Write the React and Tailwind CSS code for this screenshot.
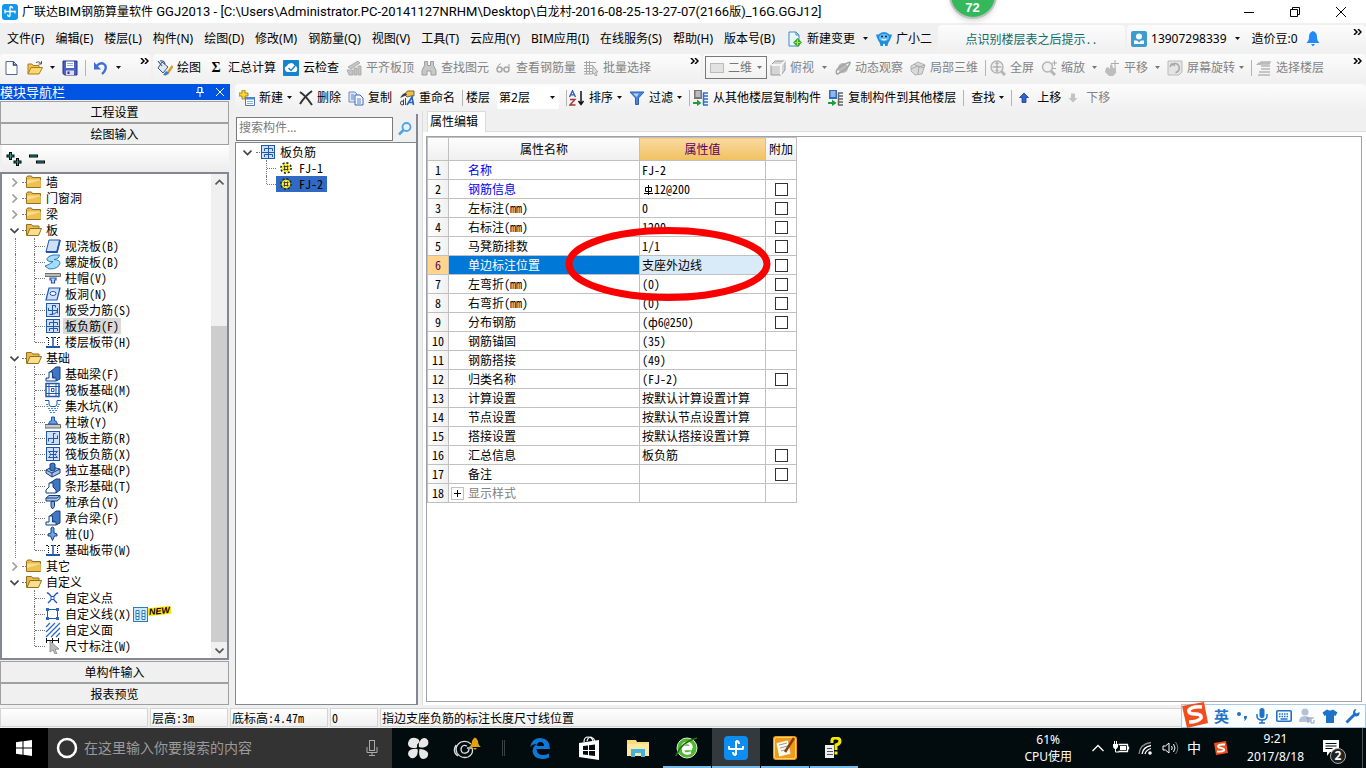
import React from "react";

/* ---------- drawing helpers ---------- */
function Ic({ w = 16, h = 16, vb, children }) {
  return (
    <svg width={w} height={h} viewBox={vb || `0 0 ${w} ${h}`} fill="none" className="shrink-0" aria-hidden="true">
      {children}
    </svg>
  );
}
const Caret = ({ tone = "#111" }) => (
  <Ic w={5} h={3}><path d="M0 0h5L2.500 3z" fill={tone} /></Ic>
);
const More = () => (
  <Ic w={9} h={6}><path d="M1 0l3 3-3 3M5 0l3 3-3 3" stroke="#000" strokeWidth="1.500" /></Ic>
);
const Sep = () => <span className="h-4 w-px shrink-0 bg-[#b4b4b4]" />;

const G = "#b5b5b5";
const icons = {
  logo: (
    <Ic><rect width="16" height="16" rx="3" fill="#1296ee" /><path d="M8 2.500v10M3 7.500h10M8 2.500q2.500 0 2.500 2M3 5.500v4M8 12.500q-2.500 0-2.500-2M13 9.500v-3" stroke="#fff" strokeWidth="1.300" /></Ic>
  ),
  changeDoc: (
    <Ic><path d="M2 1h7l3 3v11H2z" fill="#eaf6fd" stroke="#3e8cc0" /><path d="M9 1v3h3" stroke="#3e8cc0" /><path d="M10.500 7l4.500 4.500-4.500 4.500L6 11.500z" fill="#39a51c" /><path d="M10.500 8.500v6M7.500 11.500h6" stroke="#9be07f" strokeWidth="1.200" /></Ic>
  ),
  mascot: (
    <Ic><ellipse cx="8" cy="7" rx="6.500" ry="6" fill="#1c8fe3" /><path d="M0 3.500h3v5L1 7zM16 3.500h-3v5L15 7zM3.500 11h3.500v4H4.500zM9 11h3.500l-1 4H9z" fill="#1c8fe3" /><ellipse cx="8" cy="6.500" rx="5" ry="3.800" fill="#62bdf6" /><circle cx="6" cy="5.500" r="1" fill="#123" /><circle cx="10" cy="5.500" r="1" fill="#123" /><path d="M5.500 8q2.500 2 5 0" stroke="#fff" /></Ic>
  ),
  user: (
    <Ic><rect width="16" height="16" rx="2" fill="#3c9ccf" /><circle cx="8" cy="5.500" r="3" fill="#fff" /><path d="M3 13V9.500h3L8 11.500l2-2h3V13z" fill="#fff" /></Ic>
  ),
  bell: (
    <Ic w={14}><path d="M7 0c-3 1-4 3-4 6 0 3-1 4-2.500 6h13C12 10 11 9 11 6c0-3-1-5-4-6zM5 13h4l-2 2.500z" fill="#2389f5" /></Ic>
  ),
  newDoc: <Ic><path d="M2 1.500h7.500L13 5v9.500H2z" fill="#fff" stroke="#54698c" /><path d="M9.500 1.500V5H13" stroke="#2b4a80" strokeWidth="1.500" /></Ic>,
  open: (
    <Ic><path d="M1 14V4h4l1 1.500h6V8" fill="#f3c24d" stroke="#a87f26" /><path d="M1 14l3-6.500h11.500L12 14z" fill="#ffd86b" stroke="#a87f26" /><path d="M9 2.500q3-2 5 1M14.500 1v3h-3" stroke="#555" /></Ic>
  ),
  save: (
    <Ic><path d="M1 1h14v14H2.500L1 13.500z" fill="#4a62c4" stroke="#26338c" /><path d="M4 1.500h8V8H4z" fill="#fff" /><path d="M5 3.500h6M5 5.500h6" stroke="#9aabdc" /><path d="M4 10.500h8V15H4z" fill="#dde" /><path d="M5.500 11.500h2V14h-2z" fill="#26338c" /></Ic>
  ),
  undo: <Ic><path d="M3.500 6q3.500-3.500 6.500-2.500 3.500 1.500 2.500 5.500-.8 3-3.500 5" stroke="#3f6ed6" strokeWidth="2.400" /><path d="M1 2v7.500h7z" fill="#3f6ed6" /></Ic>,
  draw: (
    <Ic><path d="M5 2l6 5-5 6-5-5z" fill="#dfe9f6" stroke="#39597f" /><path d="M1 1l4 5M3 1q4-1 5 3" stroke="#39597f" strokeWidth="1.200" /><path d="M10 14l5.500-8" stroke="#d8a02c" strokeWidth="2.500" /><path d="M6 15l3-4 3 2-3 2.500z" fill="#3d7ad6" /></Ic>
  ),
  cloud: (
    <Ic><rect width="16" height="16" rx="1" fill="#1584cf" /><path d="M2 9.500a2.500 2.500 0 0 1 2-3.500 4 4 0 0 1 7.500-.5A3.500 3.500 0 0 1 12.500 12H5A3 3 0 0 1 2 9.500z" fill="#fff" /><path d="M5.500 8l2.500 2.500 4-4.500" stroke="#1584cf" strokeWidth="1.500" /></Ic>
  ),
  align: <Ic><path d="M2 7l10-6 2 2-9 6zM1 10h6v5H3zM8 8h3v7H8zM12 6h3v9h-3z" fill="#c4c4c4" stroke="#a5a5a5" strokeWidth=".8" /></Ic>,
  binoc: <Ic><path d="M3.500 1.500h3v4h3v-4h3v4l2.500 5V15h-5v-4H6v4H1v-4.500l2.500-5z" fill="#c8c8c8" stroke="#9e9e9e" /></Ic>,
  glasses: <Ic><circle cx="3.500" cy="9.500" r="2.500" stroke="#a8a8a8" strokeWidth="1.500" /><circle cx="10.500" cy="9.500" r="2.500" stroke="#a8a8a8" strokeWidth="1.500" /><path d="M6 9h2M1 9q1-5 4-5.500M13 9V4" stroke="#a8a8a8" /></Ic>,
  batch: <Ic><path d="M1 2.500h12M1 5.500h9M1 8.500h8M1 11.500h8M1 14h8M3.500 1v13M6.500 1v13" stroke="#a6a6a6" /><path d="M10 6l5 6-2.500.2 1.500 3-1.500.8-1.500-3L9.500 14z" fill="#ddd" stroke="#999" strokeWidth=".8" /></Ic>,
  cube: <Ic><path d="M1 5l4-4h10v9l-4 5H1z" fill="#d5d5d5" stroke="#999" /><path d="M1 5h10v10M11 5l4-4" stroke="#fff" strokeWidth="1.500" /></Ic>,
  orbit: <Ic><ellipse cx="8" cy="8" rx="5" ry="5" fill="#b9b9b9" /><path d="M2 14Q-1 10 8 5q8-4 7-2-1 4-7 8-5 3-6 3z" stroke="#a4a4a4" strokeWidth="1.500" /></Ic>,
  local3d: <Ic><path d="M1 6l7-4 7 3-3 9-7 1-4-4z" fill="#d9d9d9" stroke="#b0b0b0" /><path d="M4 4l5 3-1 7M1 9l7-3 6 2M9 7l6-2" stroke="#aaa" /></Ic>,
  full: <Ic><circle cx="7" cy="7" r="6" fill="#eee" stroke={G} strokeWidth="1.500" /><path d="M7 2.500v9M2.500 7h9M5.500 4L7 2.500 8.500 4M5.500 10L7 11.500 8.500 10" stroke="#999" /><path d="M11 11l4 4" stroke={G} strokeWidth="3" /></Ic>,
  zoom: <Ic><circle cx="6.500" cy="7" r="5" fill="#f1f1f1" stroke={G} strokeWidth="1.500" /><path d="M10 11l4 4" stroke={G} strokeWidth="3" /><path d="M11 3h5M13.500 .5v5M11 8.500h4" stroke="#aaa" /></Ic>,
  pan: <Ic><path d="M2 8l2-1 2 2V5l2-1 1 4 3 0v5l-3 3H5l-4-4z" fill="#bdbdbd" /><path d="M11 0v8M7 3.500h8" stroke="#aaa" /></Ic>,
  rotate: <Ic><path d="M1 1h14v11l-3 3H1z" fill="#e4e4e4" stroke="#bbb" /><path d="M4.500 5a4.500 4.500 0 1 1 4 7.500M3 7l1.500-3L8 5.500" stroke="#a5a5a5" strokeWidth="1.500" /></Ic>,
  floors: <Ic><path d="M5 2h9l-1 2H4zM5 6h9M5 9h9M3 12h11M2 15h12" fill="#ccc" stroke={G} strokeWidth="1.500" /><path d="M0 5l3-3 2 3z" fill={G} /></Ic>,
  create: <Ic><path d="M3 0h3v3h3v3H6v3H3V6H0V3h3z" fill="#ffd62e" stroke="#8c7416" strokeWidth=".8" /><path d="M6.500 7.500h9v8h-9z" fill="#fff" stroke="#4d79b8" /><path d="M6 7h10v2.500H6z" fill="#4d86d0" /><path d="M8 11.500h6M8 13.500h6" stroke="#8fb0dd" /></Ic>,
  del: <Ic w={14}><path d="M1 2q6 4 12 13M13 1Q6 6 1 14" stroke="#333" strokeWidth="2" /></Ic>,
  copy: <Ic><path d="M1 2h6l2 2v8H1z" fill="#dce8f8" stroke="#6c8cc4" /><path d="M7 5h5l3 3v7H7z" fill="#f4f8ff" stroke="#4066b5" /><path d="M3 5h3M3 7h3M3 9h3M9 9h4M9 11h4M9 13h4" stroke="#5a80c8" /></Ic>,
  rename: (
    <Ic><path d="M6 5q1-5 5-4h4v5h-3L8 7z" fill="#f0bd4a" stroke="#5d4a1e" strokeWidth=".8" /><path d="M3 5q4-4 5 0L1 8z" fill="#444" /><path d="M4.500 9.500v5.500M4.500 12.500q0-1.500-1.500-1.500t-1.500 2T3 15t1.500-1.500M6.500 8v7" stroke="#333" strokeWidth=".9" /><path d="M8 15l5-8 1.500 8M10 12.500h4" stroke="#2160c4" strokeWidth="1.600" /></Ic>
  ),
  sort: (
    <Ic><path d="M.5 7L3.500 .8 6.500 7M1.800 4.800h3.500" stroke="#2d56a8" strokeWidth="1.300" /><path d="M1 9.500h5L1 15h5.500" stroke="#a8323a" strokeWidth="1.400" /><path d="M12 1v12M9.500 11l2.500 3.500 2.500-3.500" stroke="#111" strokeWidth="1.500" /></Ic>
  ),
  filter: <Ic><path d="M1 2h14L9.500 8v6.500h-3V8z" fill="#4a86e0" stroke="#2c5fb4" /><path d="M4 3.500h6L7.500 7z" fill="#b5d2fb" /></Ic>,
  copyFrom: <Ic><path d="M1 0h8v9H1z" fill="#777" /><path d="M2.500 2h5M2.500 4h5M2.500 6h5" stroke="#fff" /><path d="M10 3h5M10 6h5M10 9h5M10 12h5M10 15h5M10.500 3v12" stroke="#2f6dc9" strokeWidth="1.500" /><path d="M0 12h4V9.500L8.500 13 4 16v-2H0z" fill="#1f9d3a" /></Ic>,
  copyTo: <Ic><path d="M1 0h8v9H1z" fill="#2f6dc9" /><path d="M2.500 2h5M2.500 4h5M2.500 6h5" stroke="#fff" /><path d="M10 3h5M10 6h5M10 9h5M10 12h5M10 15h5M10.500 3v12" stroke="#666" strokeWidth="1.500" /><path d="M0 12h4V9.500L8.500 13 4 16v-2H0z" fill="#1f9d3a" /></Ic>,
  up: <Ic w={10} h={10}><path d="M5 0l4.500 4.500H7V9.500H3V4.500H.5z" fill="#2f62d0" stroke="#1b3f94" strokeWidth=".8" /></Ic>,
  down: <Ic w={10} h={10}><path d="M5 9.500L.5 5H3V.5h4V5h2.500z" fill="#c3c3c3" /></Ic>,
  search: <Ic w={14} h={14}><circle cx="8.500" cy="5" r="4" stroke="#4ba6e8" strokeWidth="1.800" /><path d="M5.500 8L1 12.500" stroke="#4ba6e8" strokeWidth="2.500" /></Ic>,
};

const B = "#1f56b0";
const L = "#cfe0fa";
const boxFrame = <rect x="1.500" y="1.500" width="13" height="13" fill={L} stroke={B} />;
const beam = <Ic><path d="M5 6l6-5h4v12l-4 2z" fill="#3e78c4" stroke="#173f7d" /><path d="M1 15v-3h3V6h3.500v6H11v3z" fill="#e6effb" stroke="#173f7d" /></Ic>;
const strip = <Ic><path d="M1 3.500h3m2 0h5m2 0h2" stroke="#111" strokeDasharray="2 1" /><path d="M1 13h14" stroke={B} strokeWidth="2" /><path d="M8 3v10" stroke={B} strokeWidth="1.500" /><path d="M3.500 4v8M12.500 4v8" stroke="#111" strokeDasharray="1 1" /></Ic>;
const tIcons = {
  slab: <Ic><path d="M4 2h11l-3 12H1z" fill={L} stroke={B} /><path d="M1 14h11l3-12" stroke={B} strokeWidth="1.800" /></Ic>,
  spiral: <Ic><path d="M14.500 1H8Q1 3 2 6q1 2 6 1.500Q4 11 0 12l4 3q10 0 11-6 0-3-6-3.500 5-.5 5.500-4.500z" fill="#a6dcf7" stroke="#2a7fc1" /></Ic>,
  cap: <Ic><path d="M0 3.500h15.500v3H0z" fill="#bbb" stroke="#555" strokeWidth=".8" /><path d="M5 8h6v2H9.500v3h-3v-3H5z" fill={L} stroke={B} strokeWidth="1.200" /></Ic>,
  hole: <Ic><path d="M4 2h11l-3 12H1z" fill={L} stroke={B} strokeWidth="1.200" /><ellipse cx="8" cy="7.500" rx="3" ry="2" stroke={B} fill="#fff" /></Ic>,
  force: <Ic>{boxFrame}<path d="M7.500 3v10M3 8.500h10M3.500 6v3M12.500 6v5.500M7.500 3.500h3v2M7.500 12.500h-3M5 12.500q5 0 7.500-3" stroke={B} /></Ic>,
  neg: <Ic>{boxFrame}<path d="M8.500 2v12M2 8.500h12M4.500 7V4.500h8V7M4.500 13v-2.500h8V13" stroke={B} /></Ic>,
  strip,
  beam,
  raft: <Ic><path d="M1 1.500h13v13H1z" stroke={B} strokeWidth="1.500" /><path d="M4 1v14M11 1v14M1 4.500h14M1 11.500h14M6.500 6.500h2.500v3H6.500z" stroke={B} /></Ic>,
  pit: <Ic><path d="M0 2.500h4V6q0 2 2 2.500h4Q12 8 12 6V2.500h4" stroke={B} /><path d="M1 6.500h2M1.500 8.500h3M3 10.500h10M4 12.500h8M5 14.500h6M12 8.500h3M13 6.500h2" stroke="#4b86d8" strokeDasharray="2 1" /></Ic>,
  pier: <Ic><path d="M0 10.500h15.500v3.500H0z" fill="#ccc" stroke="#666" /><path d="M3.500 10l1.500-3h1.500V3h3v4H11l1.500 3z" fill="#6ea0e6" stroke={B} /></Ic>,
  main: <Ic>{boxFrame}<path d="M8.500 3v10M3 8.500h10M3.500 8.500v3M12.500 8.500v-3M8.500 3.500h2M8.500 12.500h-2" stroke={B} /></Ic>,
  rneg: <Ic>{boxFrame}<path d="M8.500 2v12M3.500 5.500h9M3.500 11.500h9M4.500 8.500h7M3.500 5.500l2 2M12.500 5.500l-2 2M3.500 11.500l2-2M12.500 11.500l-2-2" stroke={B} /></Ic>,
  iso: <Ic><path d="M1 8l6-3 8 2v4l-8 4-6-4z" fill="#a8c4ea" stroke="#173f7d" /><path d="M1 8l6 3 8-4M7 11v4" stroke="#173f7d" /><path d="M5 2l3-1 2 1v6L8 9 5 8z" fill="#3e78c4" stroke="#173f7d" /></Ic>,
  foot: <Ic><path d="M5 5l6-4h4v11l-4 3z" fill="#3e78c4" stroke="#173f7d" /><path d="M1 15v-3l3-3V5h4v4l3 3v3z" fill="#fff" stroke="#173f7d" /></Ic>,
  pileCap: <Ic><path d="M1 4l3-2.500h11v3L12 7H1z" fill="#a8c4ea" stroke="#173f7d" /><path d="M1 4h11l3-2.500" stroke="#173f7d" /><path d="M6 7.500h3.500v5L7.500 15 6 12.500z" fill="#7fa9df" stroke="#173f7d" /></Ic>,
  pile: <Ic><path d="M6 2l1.500-1L9 2v5l3 1v2H9.500L7.500 14.500 5.500 10H3V8l3-1z" fill="#6ea0e6" stroke="#173f7d" /></Ic>,
  pt: <Ic><path d="M3 3l3 3M12 3L9 6M3 13l3-3M12 13l-3-3M2 2.500l1 1M13 2.500l-1 1" stroke={B} strokeWidth="1.400" /><rect x="6" y="6.500" width="3" height="3" stroke={B} /></Ic>,
  poly: <Ic><path d="M2.500 3.500h10v9h-10z" stroke={B} /><path d="M1 2h3v3H1zM11 2h3v3h-3zM1 11h3v3H1zM11 11h3v3h-3z" fill="#2a66c8" /></Ic>,
  area: <Ic><path d="M1 5l4-4M1 10l9-9M1 15L15 1M6 15l9-9M11 15l4-4" stroke="#2a66c8" strokeWidth="1.200" /></Ic>,
  dim: <Ic><path d="M1.500 0v5M7.500 0v5M13.500 0v5M1 2.500h13" stroke="#111" /><path d="M5 3l9 8-4 .5 2 4-2 .5-2-4-3 2z" fill="#bbb" stroke="#888" strokeWidth=".8" /></Ic>,
  folder: (
    <Ic>
      <path d="M.5 3.500l1-1.500h4l1 1.500h8v10H.5z" fill="#e9b84a" stroke="#94701f" />
      <path d="M1 5.500h13.500V13H1z" fill="#f8dd8c" />
      <path d="M1 10l13.500-4V13H1z" fill="#eebf52" />
    </Ic>
  ),
  folderOpen: (
    <Ic>
      <path d="M.5 13.500V2.500h5L7 4h6v3" fill="#e9b84a" stroke="#94701f" />
      <path d="M1 13.500L4 6.500h11.500l-3 7z" fill="#fbdf8c" stroke="#94701f" />
    </Ic>
  ),
  gear: (
    <Ic w={12} h={12}>
      <circle cx="6" cy="6" r="5" stroke="#2a2a00" strokeWidth="1.800" strokeDasharray="2 1.900" />
      <circle cx="6" cy="6" r="4.300" fill="#f6ec2a" />
      <path d="M3.500 4.500h5M3.500 7.500h5M4.500 3.500v5M7.500 3.500v5" stroke="#333" strokeWidth=".9" />
    </Ic>
  ),
};

const ui = "font-['Noto_Sans','Noto_Sans_CJK_SC',sans-serif]";
const song = "font-['Noto_Sans_Mono_CJK_SC','Noto_Sans_CJK_SC',monospace]";

/* ---------- toolbar pieces ---------- */
function Tool({ icon, label, caret, off }) {
  return (
    <button type="button" className={`flex shrink-0 items-center gap-1 whitespace-nowrap ${off ? "text-[#838383]" : "text-black"}`}>
      {icon}
      <span>{label}</span>
      {caret && <Caret tone={off ? "#777" : "#111"} />}
    </button>
  );
}
const band = "flex items-center rounded-sm bg-gradient-to-b from-[#fcfcfc] to-[#f0f0f0]";

const menus = ["文件(F)", "编辑(E)", "楼层(L)", "构件(N)", "绘图(D)", "修改(M)", "钢筋量(Q)", "视图(V)", "工具(T)", "云应用(Y)", "BIM应用(I)", "在线服务(S)", "帮助(H)", "版本号(B)"];

function TitleBar() {
  return (
    <header className="flex h-[23px] items-center bg-white pl-0.5">
      {icons.logo}
      <h1 className="ml-1 flex-1 whitespace-nowrap font-['Roboto','Noto_Sans_CJK_SC',sans-serif] text-[13px]">
        <span className="text-xs">广联达</span>BIM<span className="text-xs">钢筋算量软件</span> GGJ2013 - [C:\Users\Administrator.PC-20141127NRHM\Desktop\<span className="text-xs">白龙村</span>-2016-08-25-13-27-07(2166<span className="text-xs">版</span>)_16G.GGJ12]
      </h1>
      <div className="flex items-center gap-9 pr-5">
        <button type="button" aria-label="最小化"><Ic w={10} h={10}><path d="M0 5.500h10" stroke="#000" /></Ic></button>
        <button type="button" aria-label="还原"><Ic w={10} h={10}><path d="M.5 2.500h7v7h-7zM2.500 2.500v-2h7v7h-2" stroke="#000" /></Ic></button>
        <button type="button" aria-label="关闭"><Ic w={10} h={10}><path d="M0 0l10 10M10 0L0 10" stroke="#000" /></Ic></button>
      </div>
    </header>
  );
}

function MenuBar() {
  return (
    <div className="flex h-[31px] items-center">
      <nav className="flex shrink-0 items-center gap-[11px] whitespace-nowrap pl-[7px]">
        {menus.map((m) => <button type="button" key={m}>{m}</button>)}
      </nav>
      <div className="ml-3 flex shrink-0 items-center gap-2">
        <Tool icon={icons.changeDoc} label="新建变更" />
        <Caret />
        <Tool icon={icons.mascot} label="广小二" />
      </div>
      <div className={`${band} ml-1.5 h-7 w-[187px] shrink-0 justify-center ${song}`}>
        <a href="#tip" className="text-[#0e6b6b]">点识别楼层表之后提示..</a>
      </div>
      <div className={`${band} ml-0.5 h-7 flex-1 gap-2 pl-1`}>
        <Tool icon={icons.user} label="13907298339" />
        <Caret />
        <span className="ml-1 whitespace-nowrap">造价豆:0</span>
        {icons.bell}
        <span className="ml-auto self-start pr-1 pt-1"><More /></span>
      </div>
    </div>
  );
}

function MainToolbar() {
  return (
    <div className="mb-0.5 flex h-[27px] gap-0.5">
      <div className={`${band} w-[151px] shrink-0 gap-[7px] pl-1`}>
        {icons.newDoc}{icons.open}<Caret />{icons.save}<Sep />{icons.undo}<Caret />
        <span className="ml-auto self-start pr-0.5 pt-1"><More /></span>
      </div>
      <div className={`${band} w-[548px] shrink-0 gap-[7px] pl-1`}>
        <Tool icon={icons.draw} label="绘图" />
        <Tool icon={<span className="w-4 text-center font-['Liberation_Serif',serif] text-sm font-bold leading-4">Σ</span>} label="汇总计算" />
        <Tool icon={icons.cloud} label="云检查" />
        <Tool off icon={icons.align} label="平齐板顶" />
        <Tool off icon={icons.binoc} label="查找图元" />
        <Tool off icon={icons.glasses} label="查看钢筋量" />
        <Tool off icon={icons.batch} label="批量选择" />
        <span className="ml-auto self-start pr-0.5 pt-1"><More /></span>
      </div>
      <div className={`${band} flex-1 gap-[7px]`}>
        <button type="button" className="ml-0.5 flex h-[23px] w-[62px] shrink-0 items-center gap-1 border border-[#777] pl-1 text-[#777]">
          <span className="h-2.5 w-3.5 border border-[#bbb] bg-[#e2e2e2]" />
          <span>二维</span>
          <span className="ml-auto pr-1"><Caret tone="#777" /></span>
        </button>
        <div className="-ml-1 flex items-center gap-2">
          <Tool off icon={icons.cube} label="俯视" /><Caret tone="#777" />
          <Tool off icon={icons.orbit} label="动态观察" />
        </div>
        <Tool off icon={icons.local3d} label="局部三维" />
        <div className="flex items-center gap-1"><Sep /><Tool off icon={icons.full} label="全屏" /></div>
        <div className="flex items-center gap-[7px]">
          <Tool off icon={icons.zoom} label="缩放" /><Caret tone="#777" />
          <Tool off icon={icons.pan} label="平移" /><Caret tone="#777" />
          <Tool off icon={icons.rotate} label="屏幕旋转" caret />
        </div>
        <div className="flex items-center gap-1"><Sep /><Tool off icon={icons.floors} label="选择楼层" /></div>
        <span className="ml-auto self-start pr-1 pt-1"><More /></span>
      </div>
    </div>
  );
}

function ComponentToolbar() {
  return (
    <div className={`${band} h-[27px] gap-[7px] pl-1`}>
      <Tool icon={icons.create} label="新建" caret />
      <Tool icon={icons.del} label="删除" />
      <Tool icon={icons.copy} label="复制" />
      <Tool icon={icons.rename} label="重命名" />
      <div className="flex items-center gap-[3px]">
        <Sep />
        <label htmlFor="floor" className="whitespace-nowrap">楼层</label>
        <div className="relative ml-1 flex items-center">
          <select id="floor" defaultValue="2" className="h-[23px] w-[62px] appearance-none bg-white pl-0.5 leading-none outline-none">
            <option value="2">第2层</option>
          </select>
          <span className="pointer-events-none absolute right-1"><Caret /></span>
        </div>
      </div>
      <div className="flex items-center gap-0.5"><Sep /><Tool icon={icons.sort} label="排序" caret /></div>
      <Tool icon={icons.filter} label="过滤" caret />
      <div className="flex items-center gap-[3px]"><Sep /><Tool icon={icons.copyFrom} label="从其他楼层复制构件" /></div>
      <Tool icon={icons.copyTo} label="复制构件到其他楼层" />
      <Sep />
      <Tool label="查找" caret />
      <Sep />
      <div className="flex items-center gap-2">{icons.up}<Tool label="上移" /></div>
      <div className="flex items-center gap-2">{icons.down}<Tool off label="下移" /></div>
    </div>
  );
}

/* ---------- left navigation ---------- */
const tree = [
  { t: "墙" }, { t: "门窗洞" }, { t: "梁" },
  { t: "板", guide: true, kids: [["slab", "现浇板(B)"], ["spiral", "螺旋板(B)"], ["cap", "柱帽(V)"], ["hole", "板洞(N)"], ["force", "板受力筋(S)"], ["neg", "板负筋(F)"], ["strip", "楼层板带(H)"]] },
  { t: "基础", guide: true, kids: [["beam", "基础梁(F)"], ["raft", "筏板基础(M)"], ["pit", "集水坑(K)"], ["pier", "柱墩(Y)"], ["main", "筏板主筋(R)"], ["rneg", "筏板负筋(X)"], ["iso", "独立基础(P)"], ["foot", "条形基础(T)"], ["pileCap", "桩承台(V)"], ["beam", "承台梁(F)"], ["pile", "桩(U)"], ["strip", "基础板带(W)"]] },
  { t: "其它" },
  { t: "自定义", kids: [["pt", "自定义点"], ["poly", "自定义线(X)"], ["area", "自定义面"], ["dim", "尺寸标注(W)"]] },
];

const Chevron = ({ open }) => (
  <Ic w={9} h={9}>{open ? <path d="M.5 2.500l4 4 4-4" stroke="#444" strokeWidth="1.700" /> : <path d="M2.500 .5l4 4-4 4" stroke="#a0a0a0" strokeWidth="1.700" />}</Ic>
);

function Leaf({ icon, text, last, guide }) {
  const sel = text === "板负筋(F)";
  return (
    <li className="flex h-4 items-center whitespace-nowrap pl-3">
      <span className={`h-4 w-[19px] border-l border-dotted ${guide ? "border-[#777]" : "border-transparent"}`} />
      <span className={`w-px border-l border-dotted border-[#777] ${last ? "h-2 self-start" : "h-4"}`} />
      <span className="w-2.5 border-t border-dotted border-[#777]" />
      <span className="flex w-[18px]">{tIcons[icon]}</span>
      <button type="button" className={`h-4 px-0.5 leading-4 ${sel ? "bg-[#d9d9d9]" : ""}`}>{text}</button>
      {text === "自定义线(X)" && (
        <span className="flex items-start">
          <Ic w={15} h={15}><rect x=".5" y=".5" width="14" height="14" fill="#cfeafc" stroke="#2b7fb8" /><path d="M3 3.500h3v9H3zM9 3.500h3v9H9z" fill="#fff" stroke="#2b7fb8" /><path d="M3 6.500h3M9 6.500h3M3 9.500h3M9 9.500h3" stroke="#2b7fb8" /></Ic>
          <span className="h-2 -rotate-6 bg-[#ffe600] px-px font-['Liberation_Sans',sans-serif] text-[9px] font-bold italic leading-2">NEW</span>
        </span>
      )}
    </li>
  );
}

const navBtn = "h-[22px] w-full border border-[#a0a0a0] bg-[#f0f0f0] text-center leading-5";

function Navigator() {
  return (
    <aside className={`flex w-[230px] shrink-0 flex-col ${song}`}>
      <div className="mb-px flex h-4 items-center bg-[#0054e3] text-[13px] text-white">
        <h2 className="flex-1 leading-4">模块导航栏</h2>
        <button type="button" aria-label="固定" className="mr-3"><Ic w={8} h={10}><path d="M2 .5h4v5H2zM5.500 1v4M0 5.500h8M4 6v4" stroke="#fff" /></Ic></button>
        <button type="button" aria-label="关闭" className="mr-1.5"><Ic w={8} h={8}><path d="M0 0l8 8M8 0L0 8" stroke="#fff" /></Ic></button>
      </div>
      <div className="flex flex-1 flex-col pr-px">
        <button type="button" className={navBtn}>工程设置</button>
        <button type="button" className={navBtn}>绘图输入</button>
        <div className="ml-0.5 flex h-[27px] items-center gap-[7px] bg-gradient-to-b from-white to-[#ececec] pl-1">
          <button type="button" aria-label="全部展开"><Ic><path d="M4.500 1v8M.5 5h8M11.500 7v8M7.500 11h8" stroke="#000" strokeWidth="3" /><path d="M4.500 2v6M1.500 5h6M11.500 8v6M8.500 11h6" stroke="#1aa39a" /></Ic></button>
          <button type="button" aria-label="全部折叠"><Ic><path d="M0 5h9M7 11h9" stroke="#000" strokeWidth="3" /><path d="M1 5h7M8 11h7" stroke="#1aa39a" /></Ic></button>
        </div>
        <div className="flex flex-1 border-2 border-[#828790] bg-white pl-px">
          <ul className="flex-1">
            {tree.map((n) => (
              <li key={n.t}>
                <div className="flex h-4 items-center pl-[7px]">
                  <Chevron open={!!n.kids} />
                  <span className="ml-[3px] w-1 border-t border-dotted border-[#777]" />
                  <span className="mr-1">{n.kids ? tIcons.folderOpen : tIcons.folder}</span>
                  <button type="button" className="leading-4">{n.t}</button>
                </div>
                {n.kids && (
                  <ul>
                    {n.kids.map((k, i) => <Leaf key={k[1]} icon={k[0]} text={k[1]} guide={n.guide} last={i === n.kids.length - 1} />)}
                  </ul>
                )}
              </li>
            ))}
          </ul>
          <div className="flex w-4 flex-col items-center bg-[#f0f0f0]">
            <span className="flex h-4 items-center"><Ic w={9} h={9}><path d="M.5 6.500l4-4 4 4" stroke="#555" strokeWidth="1.700" /></Ic></span>
            <span className="basis-[28%]" />
            <span className="w-full flex-1 bg-[#cdcdcd]" />
            <span className="flex h-4 items-center"><Ic w={9} h={9}><path d="M.5 2.500l4 4 4-4" stroke="#555" strokeWidth="1.700" /></Ic></span>
          </div>
        </div>
        <button type="button" className={`${navBtn} mt-px`}>单构件输入</button>
        <button type="button" className={navBtn}>报表预览</button>
      </div>
    </aside>
  );
}

/* ---------- component list ---------- */
function ComponentList() {
  return (
    <section className="mt-[3px] flex w-[183px] shrink-0 flex-col border-r-2 border-[#828790] bg-[#f0f0f0]">
      <div className="flex items-center pb-px pl-px pt-[3px]">
        <input aria-label="搜索构件" placeholder="搜索构件…" className="h-6 w-[157px] border border-[#7a7a7a] bg-white px-0.5 pb-1 outline-none placeholder:text-[#7a7a7a]" />
        <button type="button" aria-label="搜索" className="flex flex-1 justify-center">{icons.search}</button>
      </div>
      <ul className={`flex-1 border border-r-0 border-[#828790] bg-white pt-px ${song}`}>
        <li className="flex h-4 items-center pl-[7px]">
          <Chevron open />
          <span className="ml-1 w-1 border-t border-dotted border-[#777]" />
          {tIcons.neg}
          <button type="button" className="ml-1 leading-4">板负筋</button>
        </li>
        {["FJ-1", "FJ-2"].map((n, i) => (
          <li key={n} className="flex h-4 items-center pl-[30px]">
            <span className={`w-px border-l border-dotted border-[#777] ${i ? "h-2 self-start" : "h-4"}`} />
            <span className="w-[9px] border-t border-dotted border-[#777]" />
            <button type="button" className={`flex h-4 w-[51px] items-center gap-[7px] pl-1 leading-4 ${i ? "bg-[#316ac5]" : ""}`}>{tIcons.gear}{n}</button>
          </li>
        ))}
      </ul>
    </section>
  );
}

/* ---------- property grid ---------- */
const Rebar = () => (
  <svg width="12" height="10" viewBox="0 0 12 10" fill="none" className="inline-block align-[-1px]" role="img" aria-label="HRB335">
    <path d="M6.500 0v10M3.500 2.500h6v4h-6zM2 8.500h9" stroke="#000" />
  </svg>
);
const rows = [
  ["名称", "FJ-2", 0], ["钢筋信息", <><Rebar />12@200</>, 1], ["左标注(mm)", "0", 1], ["右标注(mm)", "1200", 1],
  ["马凳筋排数", "1/1", 1], ["单边标注位置", "支座外边线", 1], ["左弯折(mm)", "(0)", 1], ["右弯折(mm)", "(0)", 1],
  ["分布钢筋", "(ф6@250)", 1], ["钢筋锚固", "(35)", 0], ["钢筋搭接", "(49)", 0], ["归类名称", "(FJ-2)", 1],
  ["计算设置", "按默认计算设置计算", 0], ["节点设置", "按默认节点设置计算", 0], ["搭接设置", "按默认搭接设置计算", 0],
  ["汇总信息", "板负筋", 1], ["备注", "", 1], ["显示样式", "", 0],
];
const cell = "border border-[#c0c0c0] p-0 text-left font-normal leading-4";
const head = "border border-[#c0c0c0] p-0 text-center font-normal leading-4 whitespace-nowrap";

function PropertyGrid() {
  return (
    <section className="ml-1 flex min-w-0 flex-1 flex-col border-l border-[#dcdcdc]">
      <div role="tablist" className="ml-1 flex h-[21px]">
        <button type="button" role="tab" aria-selected="true" className="w-[59px] border border-b-0 border-[#dcdcdc] bg-white pl-0.5 text-left leading-5">属性编辑</button>
        <span className="flex-1 border-b border-[#dcdcdc]" />
      </div>
      <div className="flex-1 bg-white pb-[3px] pl-[3px] pr-1 pt-1">
        <div className={`relative h-full border border-[#a0a0a8] ${song}`}>
          <table className="table-fixed border-collapse">
            <colgroup><col className="w-[21px]" /><col className="w-[191px]" /><col className="w-[126px]" /><col className="w-[31px]" /></colgroup>
            <thead>
              <tr className="h-[23px] bg-gradient-to-b from-[#fdfdfd] to-[#efefef]">
                <th className={head} />
                <th className={head}>属性名称</th>
                <th className={`${head} bg-gradient-to-b from-[#f9d99f] to-[#f1c15f] text-[#5c005c]`}>属性值</th>
                <th className={head}>附加</th>
              </tr>
            </thead>
            <tbody>
              {rows.map(([name, value, check], i) => {
                const sel = i === 5;
                return (
                  <tr key={name} className="h-[19px]">
                    <th className={`${head} ${sel ? "bg-[#ffd58d] text-[#5c005c]" : "bg-gradient-to-r from-white to-[#f0f0f0]"}`}>{i + 1}</th>
                    <td className={`${cell} ${sel ? "bg-[#0078d7] text-white" : i < 2 ? "text-[#0000f0]" : i === 17 ? "text-[#808080]" : ""}`}>
                      <div className="flex items-center">
                        <span className="w-[19px] pl-0.5">
                          {i === 17 && <button type="button" aria-label="展开" className="flex h-[13px] w-[13px] items-center justify-center border border-[#c0c0c0]"><Ic w={7} h={7}><path d="M0 3.500h7M3.500 0v7" stroke="#000" /></Ic></button>}
                        </span>
                        <span>{name}</span>
                      </div>
                    </td>
                    <td className={`${cell} pl-0.5 ${sel ? "bg-[#d9eaf9]" : ""}`}>{value}</td>
                    <td className={cell}>
                      {check ? <input type="checkbox" aria-label={`附加 ${name}`} className="mx-auto block h-[13px] w-[13px] appearance-none border border-[#333] bg-white" /> : null}
                    </td>
                  </tr>
                );
              })}
            </tbody>
          </table>
          <svg className="pointer-events-none absolute left-[138px] top-[89px]" width="206" height="76" viewBox="0 0 206 76" fill="none" aria-hidden="true">
            <ellipse cx="103" cy="38" rx="99" ry="33.500" stroke="#fa0000" strokeWidth="7" />
          </svg>
        </div>
      </div>
    </section>
  );
}

/* ---------- status and task bars ---------- */
const stat = "border border-[#d4d4d4] bg-gradient-to-b from-white to-[#f0f0f0] pl-px leading-[18px]";
const bl = "#1e73c8";

function StatusBar() {
  return (
    <footer className={`relative flex h-[23px] gap-0.5 pb-px pt-[3px] ${song}`}>
      <span className={`${stat} w-[148px]`} />
      <span className={`${stat} w-[78px]`}>层高:3m</span>
      <span className={`${stat} w-[98px]`}>底标高:4.47m</span>
      <span className={`${stat} w-12`}>0</span>
      <span className={`${stat} flex-1`}>指边支座负筋的标注长度尺寸线位置</span>
      <div className="absolute bottom-0 right-0 flex h-6 items-center gap-[7px] border border-[#a9c8e6] bg-[#fbfdff] pl-8 pr-1">
        <span className="absolute -left-0.5 -top-1"><Ic w={30} h={28}><path d="M2 5l22-4 4 21-21 5z" fill="#f04e1c" /><path d="M22 6Q12 5 9 9q-1 4 6 4 7 0 6 4-3 4-12 4" stroke="#fff" strokeWidth="3.500" /></Ic></span>
        <span className={`text-[15px] font-bold leading-5 text-[#1e73c8] ${ui}`}>英</span>
        <Ic w={12}><circle cx="3" cy="6" r="2" fill={bl} /><path d="M8 8h3q0 4-3 5 1.500-2 0-3z" fill={bl} /></Ic>
        <Ic w={14}><rect x="4.500" y="0" width="5" height="10" rx="2.500" fill={bl} /><path d="M2 6v2q0 4 5 4t5-4V6M7 12v3M4 15h6" stroke={bl} strokeWidth="1.500" /></Ic>
        <Ic><rect x=".8" y="2.800" width="14.400" height="10.400" rx="1" stroke={bl} strokeWidth="1.600" /><path d="M3 6h10M3 8.500h10" stroke={bl} strokeWidth="1.500" strokeDasharray="1.500 1" /><path d="M4.500 11h7" stroke={bl} strokeWidth="1.500" /></Ic>
        <Ic><circle cx="6" cy="4" r="3.500" fill="#b4c2d8" /><path d="M0 14q0-6 6-6t6 6z" fill="#b4c2d8" /><path d="M7 10h8M9 10v5M12 10v5h3v-3" stroke="#8fa0bd" /></Ic>
        <Ic><path d="M5 1.500q3 2 6 0l4.500 3-2 3.500-1.500-.7V15H4V7.300L2.500 8l-2-3.500z" fill={bl} /></Ic>
        <Ic><path d="M1.500 14.500l8-8" stroke={bl} strokeWidth="3" /><path d="M14.500 4l-3 1.500-1.500-1.500L11.500 1Q8 1 8 5q0 3.500 3.500 3.500 3.500-.5 3-4.500z" fill={bl} /></Ic>
      </div>
    </footer>
  );
}

function Task({ label, run, active, children }) {
  return (
    <button type="button" aria-label={label} className={`flex h-10 w-12 items-center justify-center border-b-2 pt-0.5 ${active ? "bg-[#33393c]" : ""} ${run ? "border-[#76b9ed]" : "border-transparent"}`}>{children}</button>
  );
}

function TaskBar() {
  return (
    <footer className={`flex h-10 items-center bg-[#020b0e] text-white ${ui}`}>
      <button type="button" aria-label="开始" className="flex h-10 w-12 items-center justify-center bg-black"><Ic><path d="M0 2.300l6.500-1v6.200H0zM7.500 1.200L16 0v7.500H7.500zM0 8.500h6.500v6.200L0 13.700zM7.500 8.500H16V16l-8.500-1.200z" fill="#fff" /></Ic></button>
      <label className="flex h-10 w-[344px] items-center bg-[#333] pl-2">
        <Ic w={22} h={22}><circle cx="11" cy="11" r="9" stroke="#fff" strokeWidth="2.500" /></Ic>
        <input placeholder="在这里输入你要搜索的内容" className="ml-1.5 flex-1 bg-transparent text-sm outline-none placeholder:text-[#9a9a9a]" />
        <span className="mr-3.5"><Ic w={12} h={16}><rect x="3.500" y=".5" width="5" height="10" stroke="#aaa" /><path d="M1 7v5.500h10V7M6 13v2.500M3 15.500h6" stroke="#aaa" /></Ic></span>
      </label>
      <div className="flex items-center gap-px pl-0.5">
        <Task label="风扇"><Ic w={22} h={22}><g fill="#e8e8e8"><path d="M10.500 9.500Q6 8 6.500 4 7.500 0 12 1q5 1 3.500 4.500Q14 8 10.500 9.500z" transform="translate(-3.500 0)" /><path d="M12 10Q11 5 14.500 2q4-2.500 6.500 1.500 1.500 5-3 6.500-3 1-6 0z" /><path d="M12.500 12q5 0 8 3 2 4-2 6.500-5 1.500-6-3-.8-3 0-6.500z" /><path d="M10.500 12q1 5-2 8-4 3-7-1.500Q0 14 4 12.500q3-1 6.500-.5z" /><path d="M10 10.500Q5 12 2 9.500-.5 6 3 2q4-2.500 6 2 1.500 3 1 6.500z" /></g></Ic></Task>
        <Task label="提醒"><Ic w={28} h={24}><path d="M18 8Q14 4 8 6q-7 4-4 11 4 6 11 4 6-3 4-9h-5M14 10q-5-2-6 3 0 5 5 4 3-1 3-4M3 9Q-1 16 5 20" stroke="#ddd" strokeWidth="1.300" /><path d="M16 11q3-2 3-6 3-7 6 0 0 4 3 6zM20 12h4l-2 2z" fill="#e0a30e" /></Ic></Task>
        <span className="mx-2.5 h-4 w-[3px] border-x border-[#3a4144]" />
        <Task label="Edge"><Ic w={22} h={22}><path d="M1 10Q3 1 11.500 1 21 1.500 21 12H7.500q.5 6 6.500 6 3 0 6-1.500v4Q17 22 13 22 4 21.500 3.500 14 4 9 8 7 3 7 1 10zM8 9h7q0-4-3.500-4T8 9z" fill="#0f78d7" /></Ic></Task>
        <Task label="应用商店"><Ic w={22} h={24}><path d="M1 7l20-3v20L1 21z" fill="#fff" /><path d="M6 6Q6 1 10 1t5 4M9 5q1-4 4-4 3 1 4 4" stroke="#fff" strokeWidth="1.200" /><path d="M5 10l5-.5V14H5zM11 9.300l6-.8V14h-6zM5 15h5v4l-5-.5zM11 15h6v5l-6-.8z" fill="#020b0e" /></Ic></Task>
        <Task label="文件资源管理器"><Ic w={22} h={20}><path d="M0 2h9l1 2h12v14H0z" fill="#fbdc7c" /><path d="M0 6h22v12H0z" fill="#ffe8a0" /><path d="M4 19v-8h14v8h-4v-4H8v4z" fill="#3fb3e6" /></Ic></Task>
        <Task label="浏览器" run><Ic w={24} h={24}><circle cx="12" cy="12" r="10" fill="#4eb82f" stroke="#d7f2c8" /><path d="M17 13H8q0 5 5 4.500l3-1M7.500 11Q8 7 12 7t4.500 4z" stroke="#fff" strokeWidth="2.500" /><path d="M1 20Q6 6 22 2" stroke="#256e18" strokeWidth="1.500" /></Ic></Task>
        <Task label="广联达" run active><Ic w={24} h={24}><rect width="24" height="24" rx="4" fill="#0d8df0" /><path d="M12 5v14M5 13h14M12 5q3 0 3 3M5 10v3.500M12 19q-3 0-3-3M19 13.500V10" stroke="#fff" strokeWidth="2" /></Ic></Task>
        <Task label="便签" run><Ic w={24} h={24}><rect width="24" height="24" rx="3" fill="#f19a17" /><rect x="1.500" y="1.500" width="21" height="21" rx="2" stroke="#ffd774" /><path d="M3 7l12-3 3 14-12 3z" fill="#fffbe8" stroke="#c7933a" strokeWidth=".6" /><path d="M6 9l8-2M7 12l8-2M8 15l7-2" stroke="#999" /><path d="M21 2L12 16" stroke="#8a3c12" strokeWidth="2.500" /></Ic></Task>
        <Task label="帮助" run><Ic w={20} h={22}><path d="M1 8h9v13H1z" fill="#eee" /><path d="M3 11.500h5M3 14.500h6M3 17.500h6" stroke="#555" /><path d="M8 6V3q0-2 4-2t4 3-4 4v5M12 14.500v3" stroke="#f5e800" strokeWidth="3" /></Ic></Task>
      </div>
      <div className="ml-auto flex items-center whitespace-nowrap">
        <div className="mr-5 text-center text-xs leading-[17px]">61%<br />CPU使用</div>
        <div className="flex items-center gap-2">
          <Ic w={12} h={8}><path d="M.5 7L6 1.500 11.500 7" stroke="#fff" strokeWidth="1.300" /></Ic>
          <Ic w={18} h={14}><path d="M6.500 3.500h9v7h-9M16.500 5.500v3" stroke="#fff" strokeWidth="1.300" /><path d="M8 5h6v4H8zM1 3h5v3L4.500 8h-2L1 6zM2 0h1v3H2zM4 0h1v3H4z" fill="#fff" /><path d="M3.500 8v3H7" stroke="#fff" /></Ic>
          <Ic w={16} h={14}><path d="M1 13Q2 3 13 1.500" stroke="#888" strokeWidth="1.300" /><path d="M4 13q1-7 9-8.500M7 13q1-4 6-5.500" stroke="#fff" strokeWidth="1.300" /><circle cx="12" cy="12" r="1.800" fill="#fff" /></Ic>
          <Ic w={17} h={14}><path d="M1 5h2.500L7 2v10L3.500 9H1zM9.500 5q1.500 2 0 4M11.500 3q3 4 0 8" stroke="#fff" /><path d="M13.500 1q4.500 6 0 12" stroke="#777" /></Ic>
          <span className="text-sm leading-5">中</span>
          <span className="ml-1"><Ic><path d="M1 3l12-2 2 12-12 2z" fill="#f04e1c" /><path d="M12 4.500Q6 4 5 6q0 1.500 3 2 3.500.5 3 2.500-2 1.500-7 1" stroke="#fff" strokeWidth="2" /></Ic></span>
        </div>
        <div className="ml-[18px] text-center text-xs leading-[18px]">9:21<br />2017/8/18</div>
        <button type="button" aria-label="2 条通知" className="relative ml-[18px] mr-3 flex h-10 w-7 items-center">
          <Ic w={18} h={16}><path d="M1 0h16v12H8l-3 4v-4H1z" fill="#fff" /><path d="M3.500 3.500h11M3.500 6h11M3.500 8.500h7" stroke="#020b0e" /></Ic>
          <span className="absolute bottom-1 left-2 flex h-4 w-4 items-center justify-center rounded-full border border-[#aaa] bg-[#222] text-xs font-bold">2</span>
        </button>
        <span className="mr-[3px] h-10 w-px bg-[#4d5254]" />
      </div>
    </footer>
  );
}

export default function App() {
  return (
    <div className={`relative flex min-h-screen flex-col overflow-x-hidden bg-[#f0f0f0] text-xs text-black ${ui}`}>
      <TitleBar />
      <MenuBar />
      <MainToolbar />
      <main className="mt-px flex flex-1">
        <Navigator />
        <div className="ml-[5px] flex min-w-0 flex-1 flex-col">
          <ComponentToolbar />
          <div className="flex flex-1">
            <ComponentList />
            <PropertyGrid />
          </div>
        </div>
      </main>
      <StatusBar />
      <TaskBar />
      <div className="absolute -top-[29px] left-[71.200%] flex h-12 w-12 -translate-x-1/2 items-end justify-center rounded-full border-2 border-[#b9c2bd] bg-[#35b85c] pb-0.5 font-['Liberation_Sans',sans-serif] text-[13px] font-bold leading-[14px] text-white shadow-md">72</div>
    </div>
  );
}
